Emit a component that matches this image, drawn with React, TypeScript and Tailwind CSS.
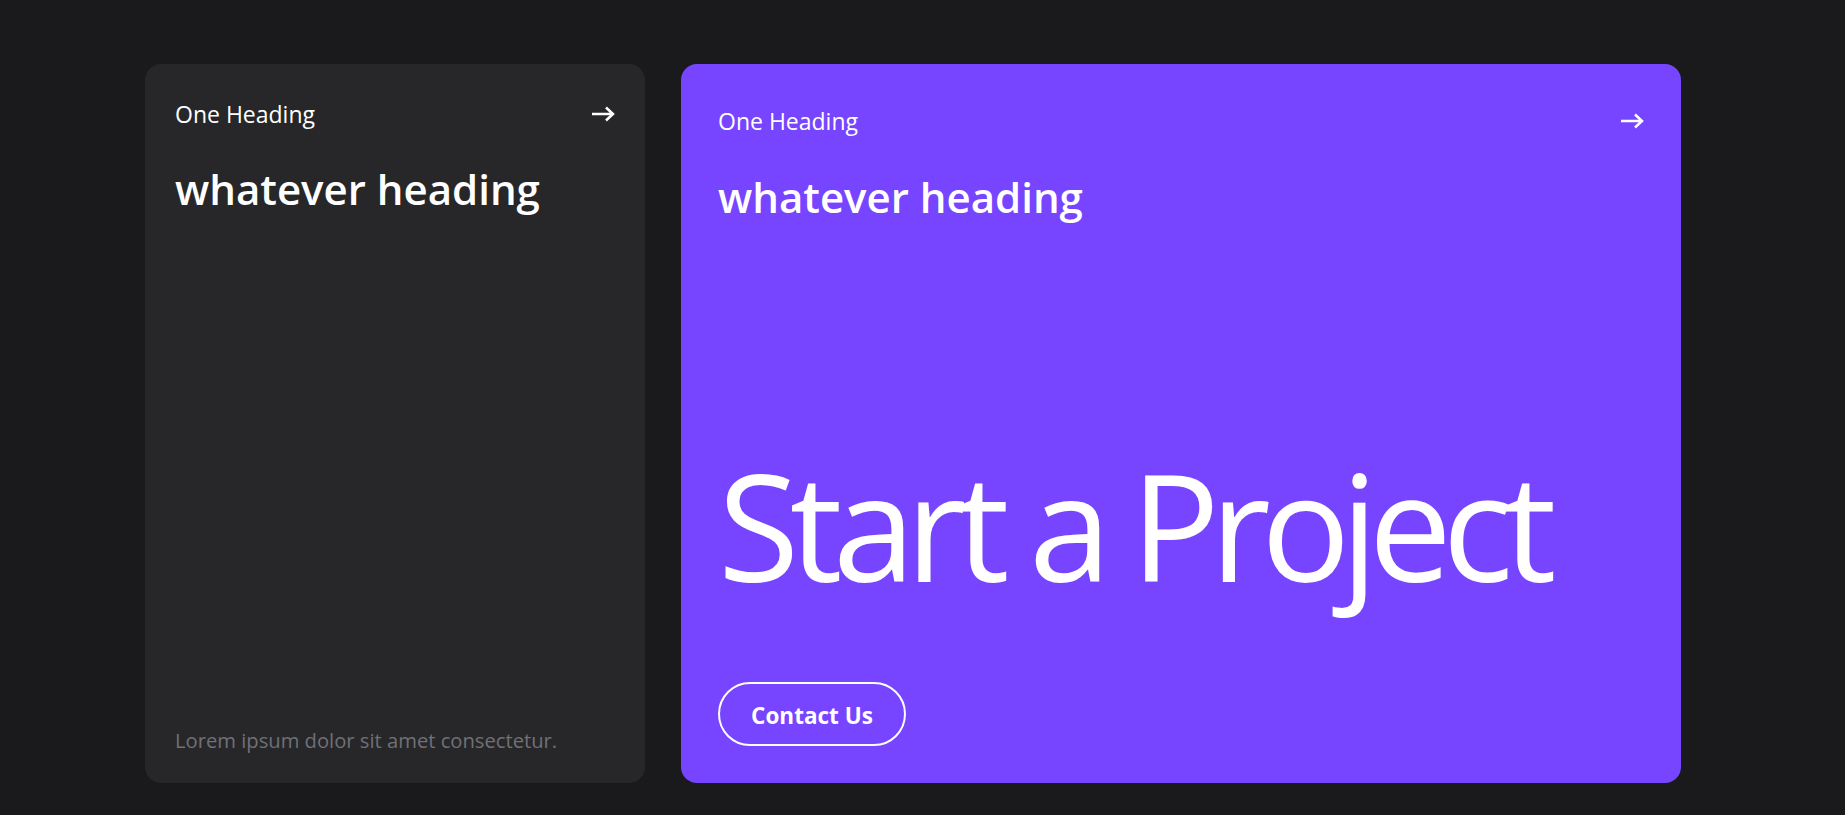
const ArrowIcon = () => (
  <svg width="24" height="16" viewBox="0 0 24 16" fill="none" className="shrink-0">
    <path d="M1 8h21M15 1.5l7 6.5-7 6.5" stroke="white" strokeWidth="2.5" />
  </svg>
);

export default function App() {
  return (
    <div
      className="min-h-screen w-full bg-[#1a1a1c] text-white"
      style={{ fontFamily: '"Open Sans", "Noto Sans", sans-serif' }}
    >
      <div className="flex gap-[36px] pl-[145px] pt-16">
        {/* left card */}
        <div className="flex h-[719px] w-[500px] flex-col rounded-2xl bg-[#27272a] px-[30px] pt-[33px] pb-[28px]">
          <div className="flex items-center justify-between">
            <span className="text-[23px] leading-[1.5]">One Heading</span>
            <ArrowIcon />
          </div>
          <h2 className="mt-[32px] text-[42px] font-semibold leading-[1.2]">whatever heading</h2>
          <p className="mt-auto text-[20.2px] leading-[1.5] text-[#707077]">
            Lorem ipsum dolor sit amet consectetur.
          </p>
        </div>

        {/* right card */}
        <div className="flex h-[719px] w-[1000px] flex-col rounded-2xl bg-[#7745ff] px-[37px] pt-[40px] pb-[37px]">
          <div className="flex items-center justify-between">
            <span className="text-[23px] leading-[1.5]">One Heading</span>
            <ArrowIcon />
          </div>
          <h2 className="mt-[33px] text-[42px] font-semibold leading-[1.2]">whatever heading</h2>
          <div className="mt-auto text-[148px] font-normal leading-none tracking-[-0.064em]">
            Start a Project
          </div>
          <button className="mt-[83px] flex h-[64px] w-[188px] items-center justify-center rounded-full border-2 border-white pt-[3px] text-[22.5px] font-bold">
            Contact Us
          </button>
        </div>
      </div>
    </div>
  );
}
